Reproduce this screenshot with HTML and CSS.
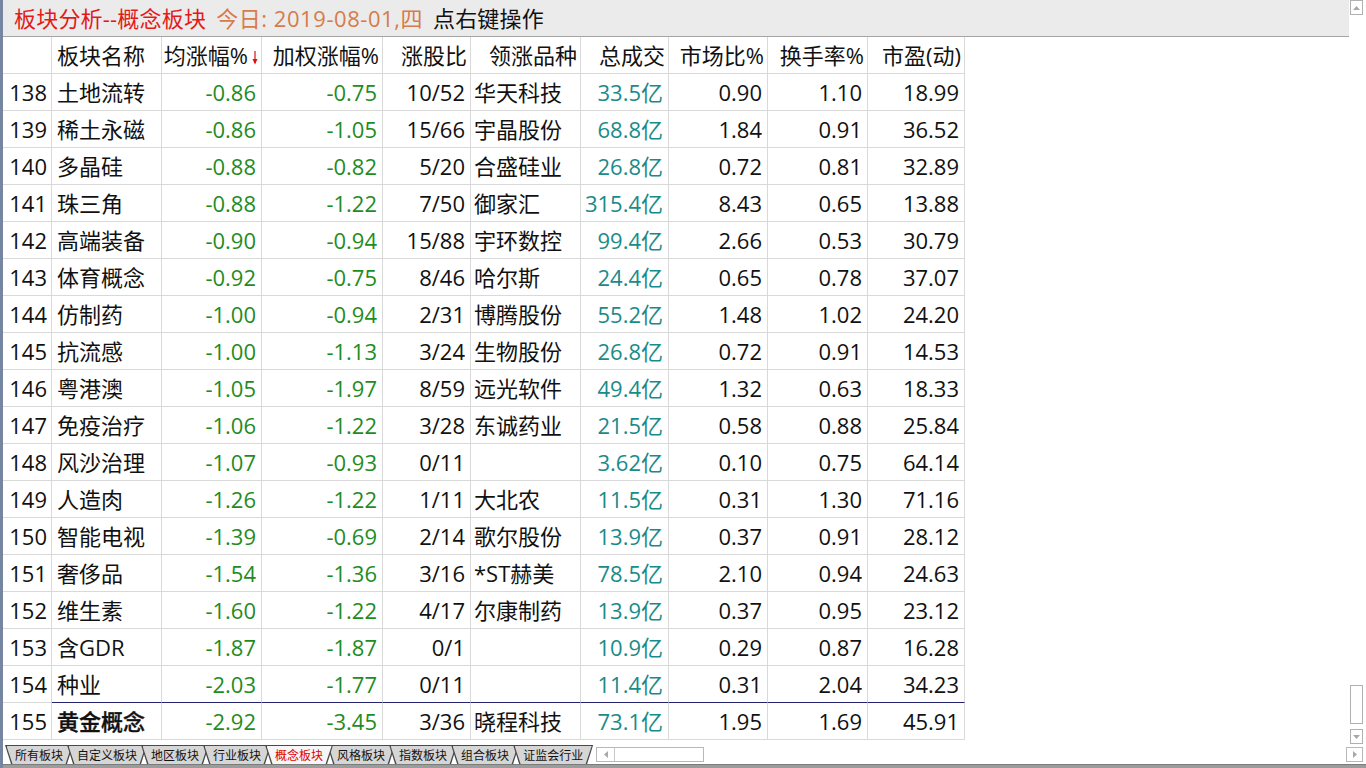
FILE: index.html
```html
<!DOCTYPE html>
<html lang="zh-CN">
<head>
<meta charset="utf-8">
<title>板块分析--概念板块</title>
<link rel="stylesheet" href="styles.css">
</head>
<body>
<div class="app">
  <div class="top">
    <div class="pane">
      <div class="titlebar">
        <span class="t-red">板块分析--概念板块</span>
        <span class="t-org">今日: 2019-08-01,四</span>
        <span class="t-blk">点右键操作</span>
      </div>
      <div class="grid">
        <div class="row head">
          <div class="c idx"></div>
          <div class="c l">板块名称</div>
          <div class="c hr">均涨幅%<svg class="sort" width="6" height="14" viewBox="0 0 6 14"><line x1="3" y1="0" x2="3" y2="12" stroke="#e01010" stroke-width="1.2"/><polygon points="0.5,8 5.5,8 3,13.5" fill="#e01010"/></svg></div>
          <div class="c hr">加权涨幅%</div>
          <div class="c hr">涨股比</div>
          <div class="c hr">领涨品种</div>
          <div class="c hr">总成交</div>
          <div class="c hr">市场比%</div>
          <div class="c hr">换手率%</div>
          <div class="c hr">市盈(动)</div>
        </div>
        <div class="row"><div class="c idx">138</div><div class="c l">土地流转</div><div class="c r g">-0.86</div><div class="c r g">-0.75</div><div class="c r">10/52</div><div class="c l2">华天科技</div><div class="c r t">33.5亿</div><div class="c r">0.90</div><div class="c r">1.10</div><div class="c r">18.99</div></div>
        <div class="row"><div class="c idx">139</div><div class="c l">稀土永磁</div><div class="c r g">-0.86</div><div class="c r g">-1.05</div><div class="c r">15/66</div><div class="c l2">宇晶股份</div><div class="c r t">68.8亿</div><div class="c r">1.84</div><div class="c r">0.91</div><div class="c r">36.52</div></div>
        <div class="row"><div class="c idx">140</div><div class="c l">多晶硅</div><div class="c r g">-0.88</div><div class="c r g">-0.82</div><div class="c r">5/20</div><div class="c l2">合盛硅业</div><div class="c r t">26.8亿</div><div class="c r">0.72</div><div class="c r">0.81</div><div class="c r">32.89</div></div>
        <div class="row"><div class="c idx">141</div><div class="c l">珠三角</div><div class="c r g">-0.88</div><div class="c r g">-1.22</div><div class="c r">7/50</div><div class="c l2">御家汇</div><div class="c r t">315.4亿</div><div class="c r">8.43</div><div class="c r">0.65</div><div class="c r">13.88</div></div>
        <div class="row"><div class="c idx">142</div><div class="c l">高端装备</div><div class="c r g">-0.90</div><div class="c r g">-0.94</div><div class="c r">15/88</div><div class="c l2">宇环数控</div><div class="c r t">99.4亿</div><div class="c r">2.66</div><div class="c r">0.53</div><div class="c r">30.79</div></div>
        <div class="row"><div class="c idx">143</div><div class="c l">体育概念</div><div class="c r g">-0.92</div><div class="c r g">-0.75</div><div class="c r">8/46</div><div class="c l2">哈尔斯</div><div class="c r t">24.4亿</div><div class="c r">0.65</div><div class="c r">0.78</div><div class="c r">37.07</div></div>
        <div class="row"><div class="c idx">144</div><div class="c l">仿制药</div><div class="c r g">-1.00</div><div class="c r g">-0.94</div><div class="c r">2/31</div><div class="c l2">博腾股份</div><div class="c r t">55.2亿</div><div class="c r">1.48</div><div class="c r">1.02</div><div class="c r">24.20</div></div>
        <div class="row"><div class="c idx">145</div><div class="c l">抗流感</div><div class="c r g">-1.00</div><div class="c r g">-1.13</div><div class="c r">3/24</div><div class="c l2">生物股份</div><div class="c r t">26.8亿</div><div class="c r">0.72</div><div class="c r">0.91</div><div class="c r">14.53</div></div>
        <div class="row"><div class="c idx">146</div><div class="c l">粤港澳</div><div class="c r g">-1.05</div><div class="c r g">-1.97</div><div class="c r">8/59</div><div class="c l2">远光软件</div><div class="c r t">49.4亿</div><div class="c r">1.32</div><div class="c r">0.63</div><div class="c r">18.33</div></div>
        <div class="row"><div class="c idx">147</div><div class="c l">免疫治疗</div><div class="c r g">-1.06</div><div class="c r g">-1.22</div><div class="c r">3/28</div><div class="c l2">东诚药业</div><div class="c r t">21.5亿</div><div class="c r">0.58</div><div class="c r">0.88</div><div class="c r">25.84</div></div>
        <div class="row"><div class="c idx">148</div><div class="c l">风沙治理</div><div class="c r g">-1.07</div><div class="c r g">-0.93</div><div class="c r">0/11</div><div class="c l2"></div><div class="c r t">3.62亿</div><div class="c r">0.10</div><div class="c r">0.75</div><div class="c r">64.14</div></div>
        <div class="row"><div class="c idx">149</div><div class="c l">人造肉</div><div class="c r g">-1.26</div><div class="c r g">-1.22</div><div class="c r">1/11</div><div class="c l2">大北农</div><div class="c r t">11.5亿</div><div class="c r">0.31</div><div class="c r">1.30</div><div class="c r">71.16</div></div>
        <div class="row"><div class="c idx">150</div><div class="c l">智能电视</div><div class="c r g">-1.39</div><div class="c r g">-0.69</div><div class="c r">2/14</div><div class="c l2">歌尔股份</div><div class="c r t">13.9亿</div><div class="c r">0.37</div><div class="c r">0.91</div><div class="c r">28.12</div></div>
        <div class="row"><div class="c idx">151</div><div class="c l">奢侈品</div><div class="c r g">-1.54</div><div class="c r g">-1.36</div><div class="c r">3/16</div><div class="c l2">*ST赫美</div><div class="c r t">78.5亿</div><div class="c r">2.10</div><div class="c r">0.94</div><div class="c r">24.63</div></div>
        <div class="row"><div class="c idx">152</div><div class="c l">维生素</div><div class="c r g">-1.60</div><div class="c r g">-1.22</div><div class="c r">4/17</div><div class="c l2">尔康制药</div><div class="c r t">13.9亿</div><div class="c r">0.37</div><div class="c r">0.95</div><div class="c r">23.12</div></div>
        <div class="row"><div class="c idx">153</div><div class="c l">含GDR</div><div class="c r g">-1.87</div><div class="c r g">-1.87</div><div class="c r">0/1</div><div class="c l2"></div><div class="c r t">10.9亿</div><div class="c r">0.29</div><div class="c r">0.87</div><div class="c r">16.28</div></div>
        <div class="row pre-sel"><div class="c idx">154</div><div class="c l">种业</div><div class="c r g">-2.03</div><div class="c r g">-1.77</div><div class="c r">0/11</div><div class="c l2"></div><div class="c r t">11.4亿</div><div class="c r">0.31</div><div class="c r">2.04</div><div class="c r">34.23</div></div>
        <div class="row sel"><div class="c idx">155</div><div class="c l b">黄金概念</div><div class="c r g">-2.92</div><div class="c r g">-3.45</div><div class="c r">3/36</div><div class="c l2">晓程科技</div><div class="c r t">73.1亿</div><div class="c r">1.95</div><div class="c r">1.69</div><div class="c r">45.91</div></div>
      </div>
    </div>
    <div class="vscroll">
      <div class="sbtn"><svg width="7" height="4" viewBox="0 0 7 4"><polygon points="0,4 7,4 3.5,0" fill="#a8a8a8"/></svg></div>
      <div class="thumb"></div>
      <div class="sbtn down"><svg width="7" height="4" viewBox="0 0 7 4"><polygon points="0,0 7,0 3.5,4" fill="#a8a8a8"/></svg></div>
    </div>
  </div>
  <div class="tabrow">
    <div class="tabs">
      <div class="tab"><span>所有板块</span></div>
      <div class="tab"><span>自定义板块</span></div>
      <div class="tab"><span>地区板块</span></div>
      <div class="tab"><span>行业板块</span></div>
      <div class="tab active"><span>概念板块</span></div>
      <div class="tab"><span>风格板块</span></div>
      <div class="tab"><span>指数板块</span></div>
      <div class="tab"><span>组合板块</span></div>
      <div class="tab"><span>证监会行业</span></div>
    </div>
    <div class="hscroll">
      <div class="hbtn"><svg width="4" height="7" viewBox="0 0 4 7"><polygon points="4,0 4,7 0,3.5" fill="#a8a8a8"/></svg></div>
    </div>
    <div class="rbtn"><svg width="4" height="7" viewBox="0 0 4 7"><polygon points="0,0 0,7 4,3.5" fill="#a8a8a8"/></svg></div>
  </div>
  <div class="edge"></div>
</div>
</body>
</html>
```

FILE: styles.css
```css
html, body {
  margin: 0;
  padding: 0;
  background: #ffffff;
}

body {
  font-family: "Open Sans", "Noto Sans CJK SC", sans-serif;
  color: #111111;
}

.app {
  width: 1366px;
  height: 768px;
  box-sizing: border-box;
  border-left: 3px solid #7686a0;
  display: flex;
  flex-direction: column;
  overflow: hidden;
}

.top {
  height: 745px;
  display: flex;
}

.pane {
  flex: 1;
  display: flex;
  flex-direction: column;
  min-width: 0;
}

.titlebar {
  height: 37px;
  box-sizing: border-box;
  background: #ebebeb;
  border-bottom: 1px solid #a4a4a4;
  display: flex;
  align-items: center;
  gap: 10px;
  padding-left: 11px;
  font-size: 22px;
  line-height: 36px;
  white-space: nowrap;
}

.t-red { color: #e31a1a; letter-spacing: 0.2px; }
.t-org { color: #d67c4a; letter-spacing: 0.55px; }
.t-blk { color: #111111; letter-spacing: 0.2px; }

.grid {
  display: flex;
  flex-direction: column;
  width: 962px;
}

.row {
  display: grid;
  grid-template-columns: 49px 110px 100px 121px 88px 110px 88px 99px 100px 97px;
  height: 37px;
}

.c {
  box-sizing: border-box;
  height: 37px;
  border-right: 1px solid #d9d9d9;
  border-bottom: 1px solid #d9d9d9;
  font-size: 22px;
  line-height: 36px;
  white-space: nowrap;
  overflow: visible;
}

.idx {
  text-align: right;
  padding-right: 4px;
}

.l {
  text-align: left;
  padding-left: 5px;
}

.l2 {
  text-align: left;
  padding-left: 3px;
}

.r {
  text-align: right;
  padding-right: 5px;
}

.hr {
  text-align: right;
  padding-right: 3px;
}

.sort {
  margin-left: 4px;
  vertical-align: -1px;
}

.g { color: #1f8c1f; }
.t { color: #1a8b8b; }
.b {
  font-weight: 500;
  -webkit-text-stroke: 0.35px #111111;
}

.pre-sel .c:not(.idx) {
  border-bottom-color: #232370;
}

.vscroll {
  width: 17px;
  display: flex;
  flex-direction: column;
  align-items: flex-start;
  padding-left: 1px;
  box-sizing: border-box;
}

.sbtn {
  width: 13px;
  height: 15px;
  box-sizing: border-box;
  border: 1px solid #b0b0b0;
  display: flex;
  align-items: center;
  justify-content: center;
  background: #ffffff;
}

.sbtn.down {
  margin-bottom: 1px;
}

.thumb {
  margin-top: auto;
  margin-bottom: 5px;
  width: 13px;
  height: 39px;
  box-sizing: border-box;
  border: 1px solid #b0b0b0;
  background: #ffffff;
}

.tabrow {
  height: 19px;
  display: flex;
  align-items: flex-start;
}

.tabs {
  display: flex;
  height: 19px;
  margin-left: 2px;
}

.tab {
  position: relative;
  margin-left: -6px;
  height: 19px;
  box-sizing: border-box;
  padding: 1px 1.5px 0 1.5px;
  background: #4a4a4a;
  clip-path: polygon(0 0, 100% 0, calc(100% - 6px) 100%, 6px 100%);
}

.tab:first-child {
  margin-left: 0;
}

.tab span {
  display: block;
  height: 18px;
  padding: 0 8.5px;
  background: #d6d6d6;
  clip-path: polygon(0 0, 100% 0, calc(100% - 6px) 100%, 6px 100%);
  font-family: "Noto Sans CJK SC", sans-serif;
  font-size: 12px;
  line-height: 18px;
  color: #111111;
  white-space: nowrap;
}

.tab.active {
  z-index: 5;
}

.tab.active span {
  background: #f6f6f6;
  color: #e00000;
}

.hscroll {
  margin-left: 3px;
  margin-top: 2px;
  width: 108px;
  height: 15px;
  box-sizing: border-box;
  border: 1px solid #b8b8b8;
  display: flex;
}

.hbtn {
  width: 17px;
  height: 13px;
  border-right: 1px solid #c8c8c8;
  display: flex;
  align-items: center;
  justify-content: center;
}

.rbtn {
  margin-left: auto;
  margin-right: 3px;
  margin-top: 2px;
  width: 17px;
  height: 15px;
  box-sizing: border-box;
  border: 1px solid #b8b8b8;
  display: flex;
  align-items: center;
  justify-content: center;
}

.edge {
  height: 4px;
  background: #9c9c9c;
  border-top: 1px solid #7c7c7c;
  box-sizing: border-box;
}
```
